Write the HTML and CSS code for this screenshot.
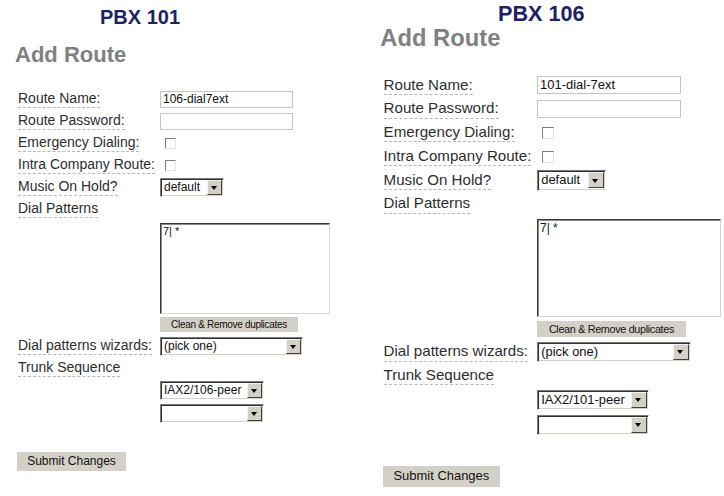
FILE: index.html
```html
<!DOCTYPE html>
<html lang="en">
<head>
  <meta charset="UTF-8" />
  <title>Add Route - PBX 101 / PBX 106</title>
  <link rel="stylesheet" href="styles.css">
</head>
<body>
  <div class="compare">

    <!-- PBX 101 -->
    <div class="panel panel-101">
      <h1 class="pbx-name">PBX 101</h1>
      <h2 class="page-title">Add Route</h2>

      <div class="route-form">
        <div class="row">
          <span class="label">Route Name:</span>
          <span class="field"><span class="textbox">106-dial7ext</span></span>
        </div>
        <div class="row">
          <span class="label">Route Password:</span>
          <span class="field"><span class="textbox"></span></span>
        </div>
        <div class="row">
          <span class="label">Emergency Dialing:</span>
          <span class="field"><span class="checkbox"></span></span>
        </div>
        <div class="row">
          <span class="label">Intra Company Route:</span>
          <span class="field"><span class="checkbox"></span></span>
        </div>
        <div class="row">
          <span class="label">Music On Hold?</span>
          <span class="field">
            <span class="select select-moh"><span class="select-value">default</span><span class="select-btn"></span></span>
          </span>
        </div>
        <div class="row">
          <span class="label">Dial Patterns</span>
        </div>
        <div class="row row-block">
          <span></span>
          <span class="field">
            <span class="textarea">7| *</span>
            <span class="small-btn">Clean &amp; Remove duplicates</span>
          </span>
        </div>
        <div class="row row-wizard">
          <span class="label">Dial patterns wizards:</span>
          <span class="field">
            <span class="select select-wizard"><span class="select-value">(pick one)</span><span class="select-btn"></span></span>
          </span>
        </div>
        <div class="row">
          <span class="label">Trunk Sequence</span>
        </div>
        <div class="row row-trunk">
          <span></span>
          <span class="field">
            <span class="select select-trunk"><span class="select-value">IAX2/106-peer</span><span class="select-btn"></span></span>
          </span>
        </div>
        <div class="row row-trunk">
          <span></span>
          <span class="field">
            <span class="select select-trunk"><span class="select-value"></span><span class="select-btn"></span></span>
          </span>
        </div>
      </div>

      <span class="submit-btn">Submit Changes</span>
    </div>

    <!-- PBX 106 -->
    <div class="panel panel-106">
      <h1 class="pbx-name">PBX 106</h1>
      <h2 class="page-title">Add Route</h2>

      <div class="route-form">
        <div class="row">
          <span class="label">Route Name:</span>
          <span class="field"><span class="textbox">101-dial-7ext</span></span>
        </div>
        <div class="row">
          <span class="label">Route Password:</span>
          <span class="field"><span class="textbox"></span></span>
        </div>
        <div class="row">
          <span class="label">Emergency Dialing:</span>
          <span class="field"><span class="checkbox"></span></span>
        </div>
        <div class="row">
          <span class="label">Intra Company Route:</span>
          <span class="field"><span class="checkbox"></span></span>
        </div>
        <div class="row">
          <span class="label">Music On Hold?</span>
          <span class="field">
            <span class="select select-moh"><span class="select-value">default</span><span class="select-btn"></span></span>
          </span>
        </div>
        <div class="row">
          <span class="label">Dial Patterns</span>
        </div>
        <div class="row row-block">
          <span></span>
          <span class="field">
            <span class="textarea">7| *</span>
            <span class="small-btn">Clean &amp; Remove duplicates</span>
          </span>
        </div>
        <div class="row row-wizard">
          <span class="label">Dial patterns wizards:</span>
          <span class="field">
            <span class="select select-wizard"><span class="select-value">(pick one)</span><span class="select-btn"></span></span>
          </span>
        </div>
        <div class="row">
          <span class="label">Trunk Sequence</span>
        </div>
        <div class="row row-trunk">
          <span></span>
          <span class="field">
            <span class="select select-trunk"><span class="select-value">IAX2/101-peer</span><span class="select-btn"></span></span>
          </span>
        </div>
        <div class="row row-trunk">
          <span></span>
          <span class="field">
            <span class="select select-trunk"><span class="select-value"></span><span class="select-btn"></span></span>
          </span>
        </div>
      </div>

      <span class="submit-btn">Submit Changes</span>
    </div>

  </div>
</body>
</html>
```

FILE: styles.css
```css
body {
  margin: 0;
  padding: 0;
  background-color: #fff;
  font-family: "Liberation Sans", Arial, sans-serif;
  color: #2e2e2e;
}

.compare {
  display: flex;
  align-items: flex-start;
}

.panel {
  width: 362px;
  box-sizing: border-box;
  flex: none;
}

.panel-106 {
  width: 335px;
  margin-left: 2px;
  zoom: 1.08;
}

/* Headings */
.pbx-name {
  margin: 0;
  font-size: 20px;
  line-height: 24px;
  font-weight: bold;
  color: #1f1f66;
  text-align: center;
}

.panel-101 .pbx-name {
  width: 280px;
  padding-top: 5px;
}

.panel-106 .pbx-name {
  width: 328px;
  padding-top: 1px;
}

.page-title {
  margin: 0;
  padding-left: 15px;
  font-size: 22px;
  line-height: 26px;
  font-weight: bold;
  color: #808080;
}

.panel-101 .page-title {
  margin-top: 13px;
}

.panel-106 .page-title {
  margin-top: -3px;
}

/* Form rows */
.route-form {
  padding-left: 18px;
}

.panel-101 .route-form {
  margin-top: 20px;
}

.panel-106 .route-form {
  margin-top: 20px;
}

.row {
  display: grid;
  grid-template-columns: 142px auto;
  align-items: center;
  min-height: 22px;
}

.label {
  justify-self: start;
  font-size: 14px;
  line-height: 17px;
  border-bottom: 1px dashed #b8b8b8;
  white-space: nowrap;
}

.field {
  display: flex;
  flex-direction: column;
  align-items: flex-start;
}

.row-block {
  padding-top: 3px;
}

.row-wizard {
  margin-top: 3px;
}

.row-trunk {
  min-height: 23px;
}

/* Controls */
.textbox {
  box-sizing: border-box;
  width: 133px;
  height: 17px;
  padding: 0 2px;
  border: 1px solid #c4c4c4;
  background: #fff;
  font-size: 12px;
  line-height: 15px;
  color: #111;
}

.checkbox {
  box-sizing: border-box;
  width: 11px;
  height: 11px;
  margin-left: 5px;
  border: 1px solid;
  border-color: #7c7c7c #e2e2e2 #e2e2e2 #7c7c7c;
  background: #fff;
}

.select {
  box-sizing: border-box;
  display: flex;
  height: 19px;
  border: 1px solid;
  border-color: #7a7a7a #fff #fff #7a7a7a;
  box-shadow: inset 1px 1px #303030, inset -1px -1px #d4d0c8;
  background: #fff;
}

.select-value {
  flex: 1;
  padding: 0 3px;
  font-size: 12px;
  line-height: 17px;
  color: #111;
  white-space: nowrap;
}

.select-btn {
  box-sizing: border-box;
  position: relative;
  width: 15px;
  margin: 1px 1px 1px 0;
  border: 1px solid;
  border-color: #f2f2f2 #404040 #404040 #f2f2f2;
  background: #d4d0c8;
}

.select-btn::after {
  content: "";
  position: absolute;
  left: 3px;
  top: 5px;
  border-top: 4px solid #000;
  border-left: 3.5px solid transparent;
  border-right: 3.5px solid transparent;
}

.select-moh {
  width: 64px;
}

.select-wizard {
  width: 143px;
}

.select-trunk {
  width: 104px;
}

.textarea {
  box-sizing: border-box;
  width: 170px;
  height: 91px;
  padding: 1px 2px;
  border: 1px solid;
  border-color: #3a3a3a #d8d8d8 #d8d8d8 #3a3a3a;
  box-shadow: inset 1px 1px #8a8a8a;
  font-size: 11px;
  line-height: 13px;
  color: #111;
}

.small-btn {
  box-sizing: border-box;
  width: 138px;
  height: 15px;
  margin-top: 3px;
  background: #d4d0c8;
  font-size: 10px;
  line-height: 15px;
  letter-spacing: -0.3px;
  text-align: center;
  color: #111;
}

.submit-btn {
  display: block;
  box-sizing: border-box;
  width: 109px;
  height: 19px;
  margin-left: 17px;
  background: #d4d0c8;
  font-size: 12px;
  line-height: 19px;
  text-align: center;
  color: #111;
}

.panel-101 .submit-btn {
  margin-top: 27px;
}

.panel-106 .submit-btn {
  margin-top: 27px;
}
```
